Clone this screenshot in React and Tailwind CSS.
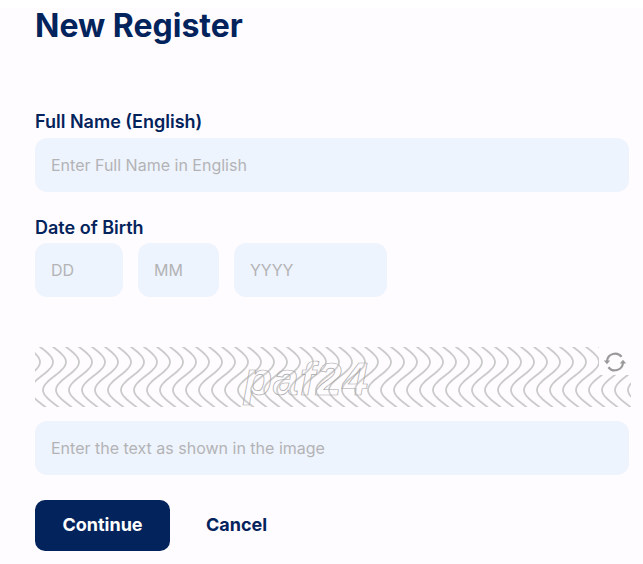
import React from "react";

function wavePath(px) {
  // S-wave: peak at y=15, trough at y=43 (inside a 60px band)
  const pts = [];
  for (let y = -2; y <= 62; y += 2) {
    const x = px - 11.5 + 11.5 * Math.cos(((y - 15) / 28) * Math.PI);
    pts.push(`${x.toFixed(2)} ${y}`);
  }
  return `M ${pts.join(" L ")}`;
}

function Captcha() {
  const peaks = [];
  for (let k = 0; k < 49; k++) peaks.push(5 + k * 13);
  return (
    <div className="relative mt-[50px] h-[60px] w-[596px]">
      <svg width="596" height="60" viewBox="0 0 596 60" className="block">
        <g fill="none" stroke="#cbcbcb" strokeWidth="1.8">
          {peaks.map((x) => (
            <path key={x} d={wavePath(x)} />
          ))}
        </g>
        <text
          x="209"
          y="48"
          fontFamily="'Liberation Sans', sans-serif"
          fontSize="46"
          fontStyle="italic"
          fontWeight="700"
          fill="#fffcff"
          fillOpacity="0.15"
          stroke="#a8a8a8"
          strokeWidth="0.7"
          letterSpacing="1"
        >
          paf24
        </text>
      </svg>
      <div className="absolute right-0 top-0 flex h-[28px] w-[32px] items-center justify-center bg-[#fffcff]">
        <svg width="24" height="24" viewBox="0 0 24 24" fill="none" stroke="#9a9a9a" strokeWidth="2.2" className="mt-[2px]">
          <path d="M4 11 A8.2 8.2 0 0 1 18.6 6.8" />
          <path d="M20 13 A8.2 8.2 0 0 1 5.4 17.2" />
          <path d="M0.8 10.5 L7.2 10.5 L4 14.2 Z" fill="#9a9a9a" stroke="none" />
          <path d="M16.8 13.5 L23.2 13.5 L20 9.8 Z" fill="#9a9a9a" stroke="none" />
        </svg>
      </div>
    </div>
  );
}

const inputCls =
  "block h-[54px] rounded-[12px] bg-[#eef4fd] px-4 text-base text-[#03235c] outline-none placeholder:text-[#b3b3b6]";

export default function App() {
  return (
    <div className="bg-white pt-[8px] font-['Inter',sans-serif] text-[#03235c]">
      <div className="min-h-[556px] bg-[#fffcff] pl-[35px] pr-[14px]">
        <h1 className="h-[36px] text-[32px] font-bold leading-[36px]">New Register</h1>
        <label className="mt-[66px] block text-[18px] font-semibold leading-[24px]" htmlFor="fullname">
          Full Name (English)
        </label>
        <input id="fullname" className={`${inputCls} mt-[4px] w-[594px]`} placeholder="Enter Full Name in English" />
        <div className="mt-[24px] text-[18px] font-semibold leading-[24px]">Date of Birth</div>
        <div className="mt-[3px] flex gap-[15px]">
          <input className={`${inputCls} w-[88px]`} placeholder="DD" />
          <input className={`${inputCls} w-[81px]`} placeholder="MM" />
          <input className={`${inputCls} w-[153px]`} placeholder="YYYY" />
        </div>
        <Captcha />
        <input className={`${inputCls} mt-[14px] w-[594px]`} placeholder="Enter the text as shown in the image" />
        <div className="mt-[25px] flex items-center">
          <button className="h-[51px] w-[135px] rounded-[10px] bg-[#03235c] pb-[2px] text-[18px] font-bold text-white">
            Continue
          </button>
          <button className="ml-[36px] pb-[2px] text-[18px] font-bold text-[#03235c]">Cancel</button>
        </div>
      </div>
    </div>
  );
}
